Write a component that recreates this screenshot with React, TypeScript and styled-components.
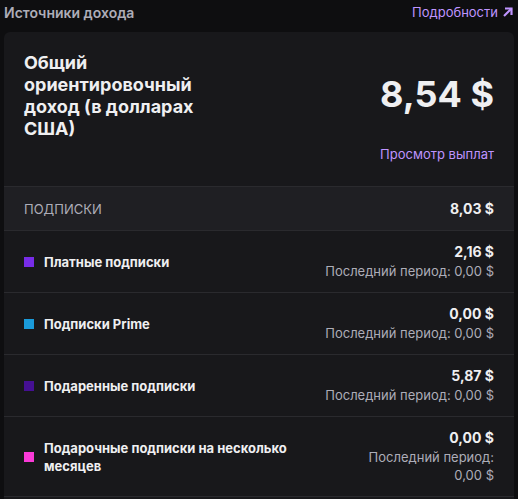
import React from 'react';
import styled, { createGlobalStyle } from 'styled-components';

type Source = {
  label: string;
  color: string;
  amount: string;
  last: string;
};

const sources: Source[] = [
  { label: 'Платные подписки', color: '#772ce8', amount: '2,16 $', last: '0,00 $' },
  { label: 'Подписки Prime', color: '#1a9ad9', amount: '0,00 $', last: '0,00 $' },
  { label: 'Подаренные подписки', color: '#451093', amount: '5,87 $', last: '0,00 $' },
  { label: 'Подарочные подписки на несколько месяцев', color: '#fa3ad8', amount: '0,00 $', last: '0,00 $' },
];

const ArrowIcon = () => (
  <svg width="12" height="12" viewBox="0 0 12 12" fill="none">
    <path d="M2 10L9.5 2.5" stroke="currentColor" strokeWidth="2.2" />
    <path d="M3 2.5H9.5V9" stroke="currentColor" strokeWidth="2.2" />
  </svg>
);

const App: React.FC = () => {
  return (
    <>
      <GlobalStyle />
      <Page>
        <Header>
          <Title>Источники дохода</Title>
          <DetailsLink href="#">
            Подробности <ArrowIcon />
          </DetailsLink>
        </Header>
        <Card>
          <Summary>
            <SummaryTitle>Общий ориентировочный доход (в долларах США)</SummaryTitle>
            <SummaryRight>
              <Total>8,54 $</Total>
              <PayoutsLink href="#">Просмотр выплат</PayoutsLink>
            </SummaryRight>
          </Summary>
          <GroupHeader>
            <GroupName>Подписки</GroupName>
            <GroupAmount>8,03 $</GroupAmount>
          </GroupHeader>
          {sources.map((s) => (
            <Row key={s.label}>
              <Label>
                <Swatch $color={s.color} />
                <LabelText>{s.label}</LabelText>
              </Label>
              <Values>
                <Amount>{s.amount}</Amount>
                <Last>Последний период: {s.last}</Last>
              </Values>
            </Row>
          ))}
        </Card>
      </Page>
    </>
  );
};

const GlobalStyle = createGlobalStyle`
  html, body {
    margin: 0;
    background: #0e0e10;
    font-family: Inter, "Noto Sans", sans-serif;
    color: #efeff1;
    overflow: hidden;
  }
`;

const Page = styled.div`
  padding: 0 4px;
  display: flex;
  flex-direction: column;
`;

const Header = styled.div`
  display: flex;
  justify-content: space-between;
  align-items: center;
  height: 24px;
  padding-bottom: 8px;
`;

const Title = styled.span`
  font-size: 14px;
  font-weight: 600;
  color: #adadb8;
`;

const DetailsLink = styled.a`
  display: flex;
  align-items: center;
  gap: 4px;
  font-size: 13px;
  color: #bf94ff;
  text-decoration: none;
`;

const Card = styled.div`
  background: #18181b;
  border-radius: 6px;
  min-height: 500px;
`;

const Summary = styled.div`
  display: flex;
  justify-content: space-between;
  padding: 20px 20px 23px;
`;

const SummaryTitle = styled.div`
  max-width: 185px;
  font-size: 18px;
  font-weight: 700;
  line-height: 22px;
  color: #efeff1;
`;

const SummaryRight = styled.div`
  display: flex;
  flex-direction: column;
  align-items: flex-end;
  padding-top: 18px;
  gap: 27px;
`;

const Total = styled.div`
  font-size: 36px;
  font-weight: 700;
  line-height: 48px;
  color: #efeff1;
`;

const PayoutsLink = styled.a`
  font-size: 13px;
  line-height: 18px;
  color: #bf94ff;
  text-decoration: none;
`;

const GroupHeader = styled.div`
  display: flex;
  justify-content: space-between;
  align-items: center;
  height: 43px;
  padding: 0 20px;
  background: #1f1f23;
  border-top: 1px solid #2a2a2e;
`;

const GroupName = styled.span`
  font-size: 13px;
  text-transform: uppercase;
  color: #adadb8;
`;

const GroupAmount = styled.span`
  font-size: 14px;
  font-weight: 700;
  color: #efeff1;
`;

const Row = styled.div`
  display: flex;
  justify-content: space-between;
  align-items: center;
  gap: 50px;
  padding: 12px 20px;
  border-top: 1px solid #2a2a2e;
  &:last-child {
    border-bottom: 1px solid #2a2a2e;
  }
`;

const Label = styled.div`
  flex: 1 1 auto;
  display: flex;
  align-items: center;
  gap: 10px;
  max-width: 280px;
`;

const Swatch = styled.span<{ $color: string }>`
  flex: none;
  width: 10px;
  height: 10px;
  background: ${(p) => p.$color};
`;

const LabelText = styled.span`
  font-size: 13px;
  font-weight: 700;
  line-height: 18px;
  color: #efeff1;
`;

const Values = styled.div`
  flex: 0 1 auto;
  display: flex;
  flex-direction: column;
  align-items: flex-end;
  gap: 1px;
  max-width: 175px;
  text-align: right;
`;

const Amount = styled.span`
  font-size: 14px;
  font-weight: 700;
  line-height: 18px;
  color: #efeff1;
`;

const Last = styled.span`
  font-size: 13px;
  line-height: 18px;
  color: #adadb8;
`;

export default App;
